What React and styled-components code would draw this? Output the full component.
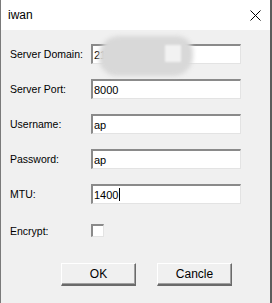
import React from 'react';
import styled, { createGlobalStyle } from 'styled-components';

const GlobalStyle = createGlobalStyle`
  html, body {
    margin: 0;
    padding: 0;
    background: #f0f0f0;
  }
  body {
    font-family: "Liberation Sans", Arial, sans-serif;
  }
`

const Window = styled.div`
  width: 272px;
  height: 303px;
  box-sizing: border-box;
  border-left: 1px solid #7a7a7a;
  border-right: 2px solid #5c5c5c;
  background: #f0f0f0;
  display: flex;
  flex-direction: column;
  overflow: hidden;
`

const TitleBar = styled.div`
  height: 30px;
  background: #ffffff;
  display: flex;
  align-items: center;
  justify-content: space-between;
  padding: 0 9px 0 7px;
  font-size: 12px;
  color: #000;
  flex-shrink: 0;
`

const CloseIcon = styled.svg`
  width: 11px;
  height: 11px;
  display: block;
`

const Body = styled.div`
  display: flex;
  flex-direction: column;
  padding: 14px 0 0 9px;
`

const Row = styled.div`
  display: flex;
  align-items: center;
  height: ${p => p.$h || 20}px;
  margin-bottom: ${p => p.$gap ?? 15}px;
`

const Label = styled.div`
  width: 81px;
  font-size: 10.5px;
  color: #000;
  flex-shrink: 0;
`

const InputBox = styled.div`
  position: relative;
  width: 150px;
  height: 20px;
  box-sizing: border-box;
  background: #fff;
  border-top: 2px solid #8a8a8a;
  border-left: 2px solid #8a8a8a;
  border-right: 1px solid #e3e3e3;
  border-bottom: 1px solid #e3e3e3;
  display: flex;
  align-items: center;
  padding-left: 1px;
  font-size: 11px;
  color: #000;
  overflow: visible;
`

const Caret = styled.span`
  display: inline-block;
  width: 1px;
  height: 13px;
  background: #000;
  margin-left: 1px;
`

const Smudge = styled.div`
  position: absolute;
  left: 6px;
  top: -10px;
  width: 94px;
  height: 40px;
  border-radius: 20px 16px 20px 18px;
  background: #d8d8d8;
  filter: blur(2px);
  pointer-events: none;
  z-index: 1;
`

const SmudgeLight = styled.div`
  position: absolute;
  left: 72px;
  top: -1px;
  width: 16px;
  height: 17px;
  background: #f2f2f2;
  filter: blur(1px);
  pointer-events: none;
  z-index: 2;
`

const Check = styled.div`
  width: 13px;
  height: 13px;
  box-sizing: border-box;
  background: #fff;
  border-top: 2px solid #8a8a8a;
  border-left: 2px solid #8a8a8a;
  border-right: 1px solid #e3e3e3;
  border-bottom: 1px solid #e3e3e3;
`

const Buttons = styled.div`
  display: flex;
  gap: 21px;
  padding-left: 51px;
  margin-top: 26px;
`

const Button = styled.div`
  width: 75px;
  height: 23px;
  box-sizing: border-box;
  background: #f0f0f0;
  border-top: 1px solid #ffffff;
  border-left: 1px solid #ffffff;
  border-right: 1px solid #6a6a6a;
  border-bottom: 2px solid #6a6a6a;
  box-shadow: inset -1px -1px 0 #a0a0a0;
  display: flex;
  align-items: center;
  justify-content: center;
  font-size: 12px;
  color: #000;
`

const fields = [
  { label: 'Server Domain:', value: '21', smudge: true },
  { label: 'Server Port:', value: '8000' },
  { label: 'Username:', value: 'ap' },
  { label: 'Password:', value: 'ap' },
  { label: 'MTU:', value: '1400', caret: true },
]

export default function App() {
  return (
    <>
      <GlobalStyle />
      <Window>
        <TitleBar>
          <span>iwan</span>
          <CloseIcon viewBox="0 0 11 11">
            <path d="M0.5 0.5 L10.5 10.5 M10.5 0.5 L0.5 10.5" stroke="#000" strokeWidth="1" fill="none" />
          </CloseIcon>
        </TitleBar>
        <Body>
          {fields.map(f => (
            <Row key={f.label}>
              <Label>{f.label}</Label>
              <InputBox>
                {f.value}
                {f.caret && <Caret />}
                {f.smudge && <Smudge />}
                {f.smudge && <SmudgeLight />}
              </InputBox>
            </Row>
          ))}
          <Row $h={13} $gap={0} style={{ marginTop: 5 }}>
            <Label>Encrypt:</Label>
            <Check />
          </Row>
          <Buttons>
            <Button>OK</Button>
            <Button>Cancle</Button>
          </Buttons>
        </Body>
      </Window>
    </>
  );
}
